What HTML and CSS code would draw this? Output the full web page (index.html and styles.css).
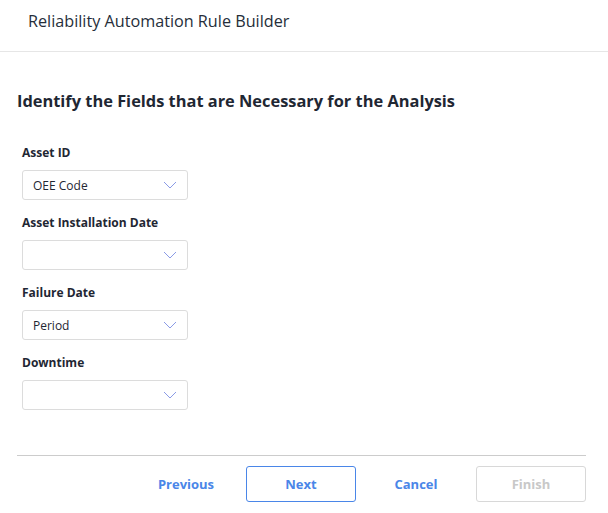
FILE: index.html
```html
<!DOCTYPE html>
<html>
<head>
<meta charset="utf-8">
<link rel="stylesheet" href="styles.css">
</head>
<body>
<div class="page">
  <header class="header">Reliability Automation Rule Builder</header>
  <main class="content">
    <h1 class="heading">Identify the Fields that are Necessary for the Analysis</h1>
    <div class="field">
      <label class="label">Asset ID</label>
      <div class="select"><span class="value">OEE Code</span><svg class="chev" width="14" height="8" viewBox="0 0 14 8"><path d="M1 1 L7 7 L13 1" fill="none" stroke="#8a9ae6" stroke-width="1"/></svg></div>
    </div>
    <div class="field">
      <label class="label">Asset Installation Date</label>
      <div class="select"><span class="value"></span><svg class="chev" width="14" height="8" viewBox="0 0 14 8"><path d="M1 1 L7 7 L13 1" fill="none" stroke="#8a9ae6" stroke-width="1"/></svg></div>
    </div>
    <div class="field">
      <label class="label">Failure Date</label>
      <div class="select"><span class="value">Period</span><svg class="chev" width="14" height="8" viewBox="0 0 14 8"><path d="M1 1 L7 7 L13 1" fill="none" stroke="#8a9ae6" stroke-width="1"/></svg></div>
    </div>
    <div class="field">
      <label class="label">Downtime</label>
      <div class="select"><span class="value"></span><svg class="chev" width="14" height="8" viewBox="0 0 14 8"><path d="M1 1 L7 7 L13 1" fill="none" stroke="#8a9ae6" stroke-width="1"/></svg></div>
    </div>
  </main>
  <footer class="footer">
    <button class="btn link">Previous</button>
    <button class="btn outline">Next</button>
    <button class="btn link">Cancel</button>
    <button class="btn disabled">Finish</button>
  </footer>
</div>
</body>
</html>
```
FILE: styles.css
```css
* { box-sizing: border-box; }
html, body { margin: 0; padding: 0; background: #fff; }
body { font-family: "Open Sans", "Noto Sans", sans-serif; color: #1f2733; width: 608px; height: 513px; overflow: hidden; }
.page { display: flex; flex-direction: column; }
.header { height: 52px; border-bottom: 1px solid #e6e6e6; padding: 10px 0 0 28px; font-size: 16.2px; line-height: 22px; color: #262e3a; }
.content { padding: 38px 0 0 17px; }
.heading { margin: 0 0 32px 0; font-size: 16.4px; font-weight: 700; line-height: 22px; }
.field { display: flex; flex-direction: column; padding-left: 5px; margin-bottom: 14px; }
.label { font-size: 12px; font-weight: 700; line-height: 18px; margin-bottom: 8px; }
.select { width: 166px; height: 30px; border: 1px solid #dcdcdc; border-radius: 3px; display: flex; align-items: center; justify-content: space-between; padding: 0 10px 0 10px; }
.value { font-size: 12px; }
.chev { display: block; }
.footer { margin: 31px 22px 0 17px; border-top: 1px solid #cccccc; padding-top: 10px; display: flex; justify-content: flex-end; gap: 5px; }
.btn { font-family: inherit; font-size: 13px; font-weight: 700; height: 36px; width: 110px; background: #fff; border-radius: 3px; margin: 0; cursor: pointer; }
.link { border: none; color: #4a86e8; }
.outline { border: 1px solid #4a86e8; color: #4a86e8; }
.disabled { border: 1px solid #d8d8d8; color: #c8c8c8; }
```
